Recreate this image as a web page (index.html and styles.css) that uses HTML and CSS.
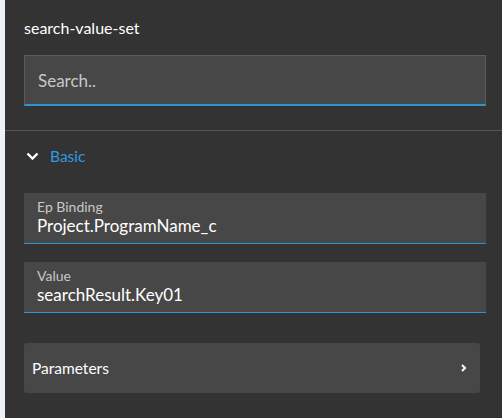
FILE: index.html
```html
<!doctype html>
<html lang="en">
    <head>
        <meta charset="UTF-8" />
        <meta name="viewport" content="width=device-width, initial-scale=1.0" />
        <title>search-value-set</title>
        <link rel="stylesheet" href="styles.css">
    </head>
    <body>
        <div class="panel">
            <section class="top">
                <h1 class="title">search-value-set</h1>
                <div class="search">
                    <input type="text" placeholder="Search.." />
                </div>
            </section>

            <section class="group">
                <div class="group-head">
                    <svg class="chevron-down" width="13" height="9" viewBox="0 0 13 9">
                        <path d="M1.5 1.5 L6.5 6.5 L11.5 1.5" fill="none" stroke="#fff" stroke-width="2.4" />
                    </svg>
                    <span>Basic</span>
                </div>

                <div class="field">
                    <label>Ep Binding</label>
                    <div class="field-value">Project.ProgramName_c</div>
                </div>

                <div class="field">
                    <label>Value</label>
                    <div class="field-value">searchResult.Key01</div>
                </div>

                <div class="link-row">
                    <span>Parameters</span>
                    <svg class="chevron-right" width="6" height="8" viewBox="0 0 6 8">
                        <path d="M1 1 L4 4 L1 7" fill="none" stroke="#fff" stroke-width="2" />
                    </svg>
                </div>
            </section>
        </div>
    </body>
</html>
```

FILE: styles.css
```css
body {
    margin: 0;
    padding: 0;
    background-color: #eef2f6;
    font-family: Lato, "Open Sans", sans-serif;
    color: #fff;
}

.panel {
    margin-left: 5px;
    height: 418px;
    background-color: #333333;
    overflow: hidden;
}

.top {
    padding: 18px 16px 24px 19px;
    border-bottom: 1px solid #555;
}

.title {
    margin: 0 0 17px 0;
    font-size: 16px;
    font-weight: normal;
    line-height: 20px;
}

.search input {
    box-sizing: border-box;
    display: block;
    width: 100%;
    height: 51px;
    padding: 0 13px;
    background-color: #474747;
    border: 1px solid #5c5c5c;
    border-bottom: 2px solid #2a95d4;
    color: #fff;
    font-family: inherit;
    font-size: 17px;
    outline: none;
}

.search input::placeholder {
    color: #c8c8c8;
}

.group {
    padding: 14px 16px 0 19px;
}

.group-head {
    display: flex;
    align-items: center;
    gap: 11px;
    padding-left: 2px;
    height: 22px;
    margin-bottom: 26px;
    color: #2d9ae0;
    font-size: 15.5px;
}

.field {
    box-sizing: border-box;
    height: 51px;
    padding: 5px 13px 0 13px;
    margin-bottom: 18px;
    background-color: #474747;
    border-bottom: 1px solid #2a95d4;
}

.field label {
    display: block;
    color: #c8c8c8;
    font-size: 14px;
    line-height: 17px;
}

.field-value {
    font-size: 17px;
    line-height: 22px;
}

.link-row {
    display: flex;
    align-items: center;
    justify-content: space-between;
    height: 50px;
    margin-top: 30px;
    margin-right: 6px;
    padding: 0 13px 0 8px;
    background-color: #474747;
    border-radius: 3px;
    font-size: 15.5px;
}
```
